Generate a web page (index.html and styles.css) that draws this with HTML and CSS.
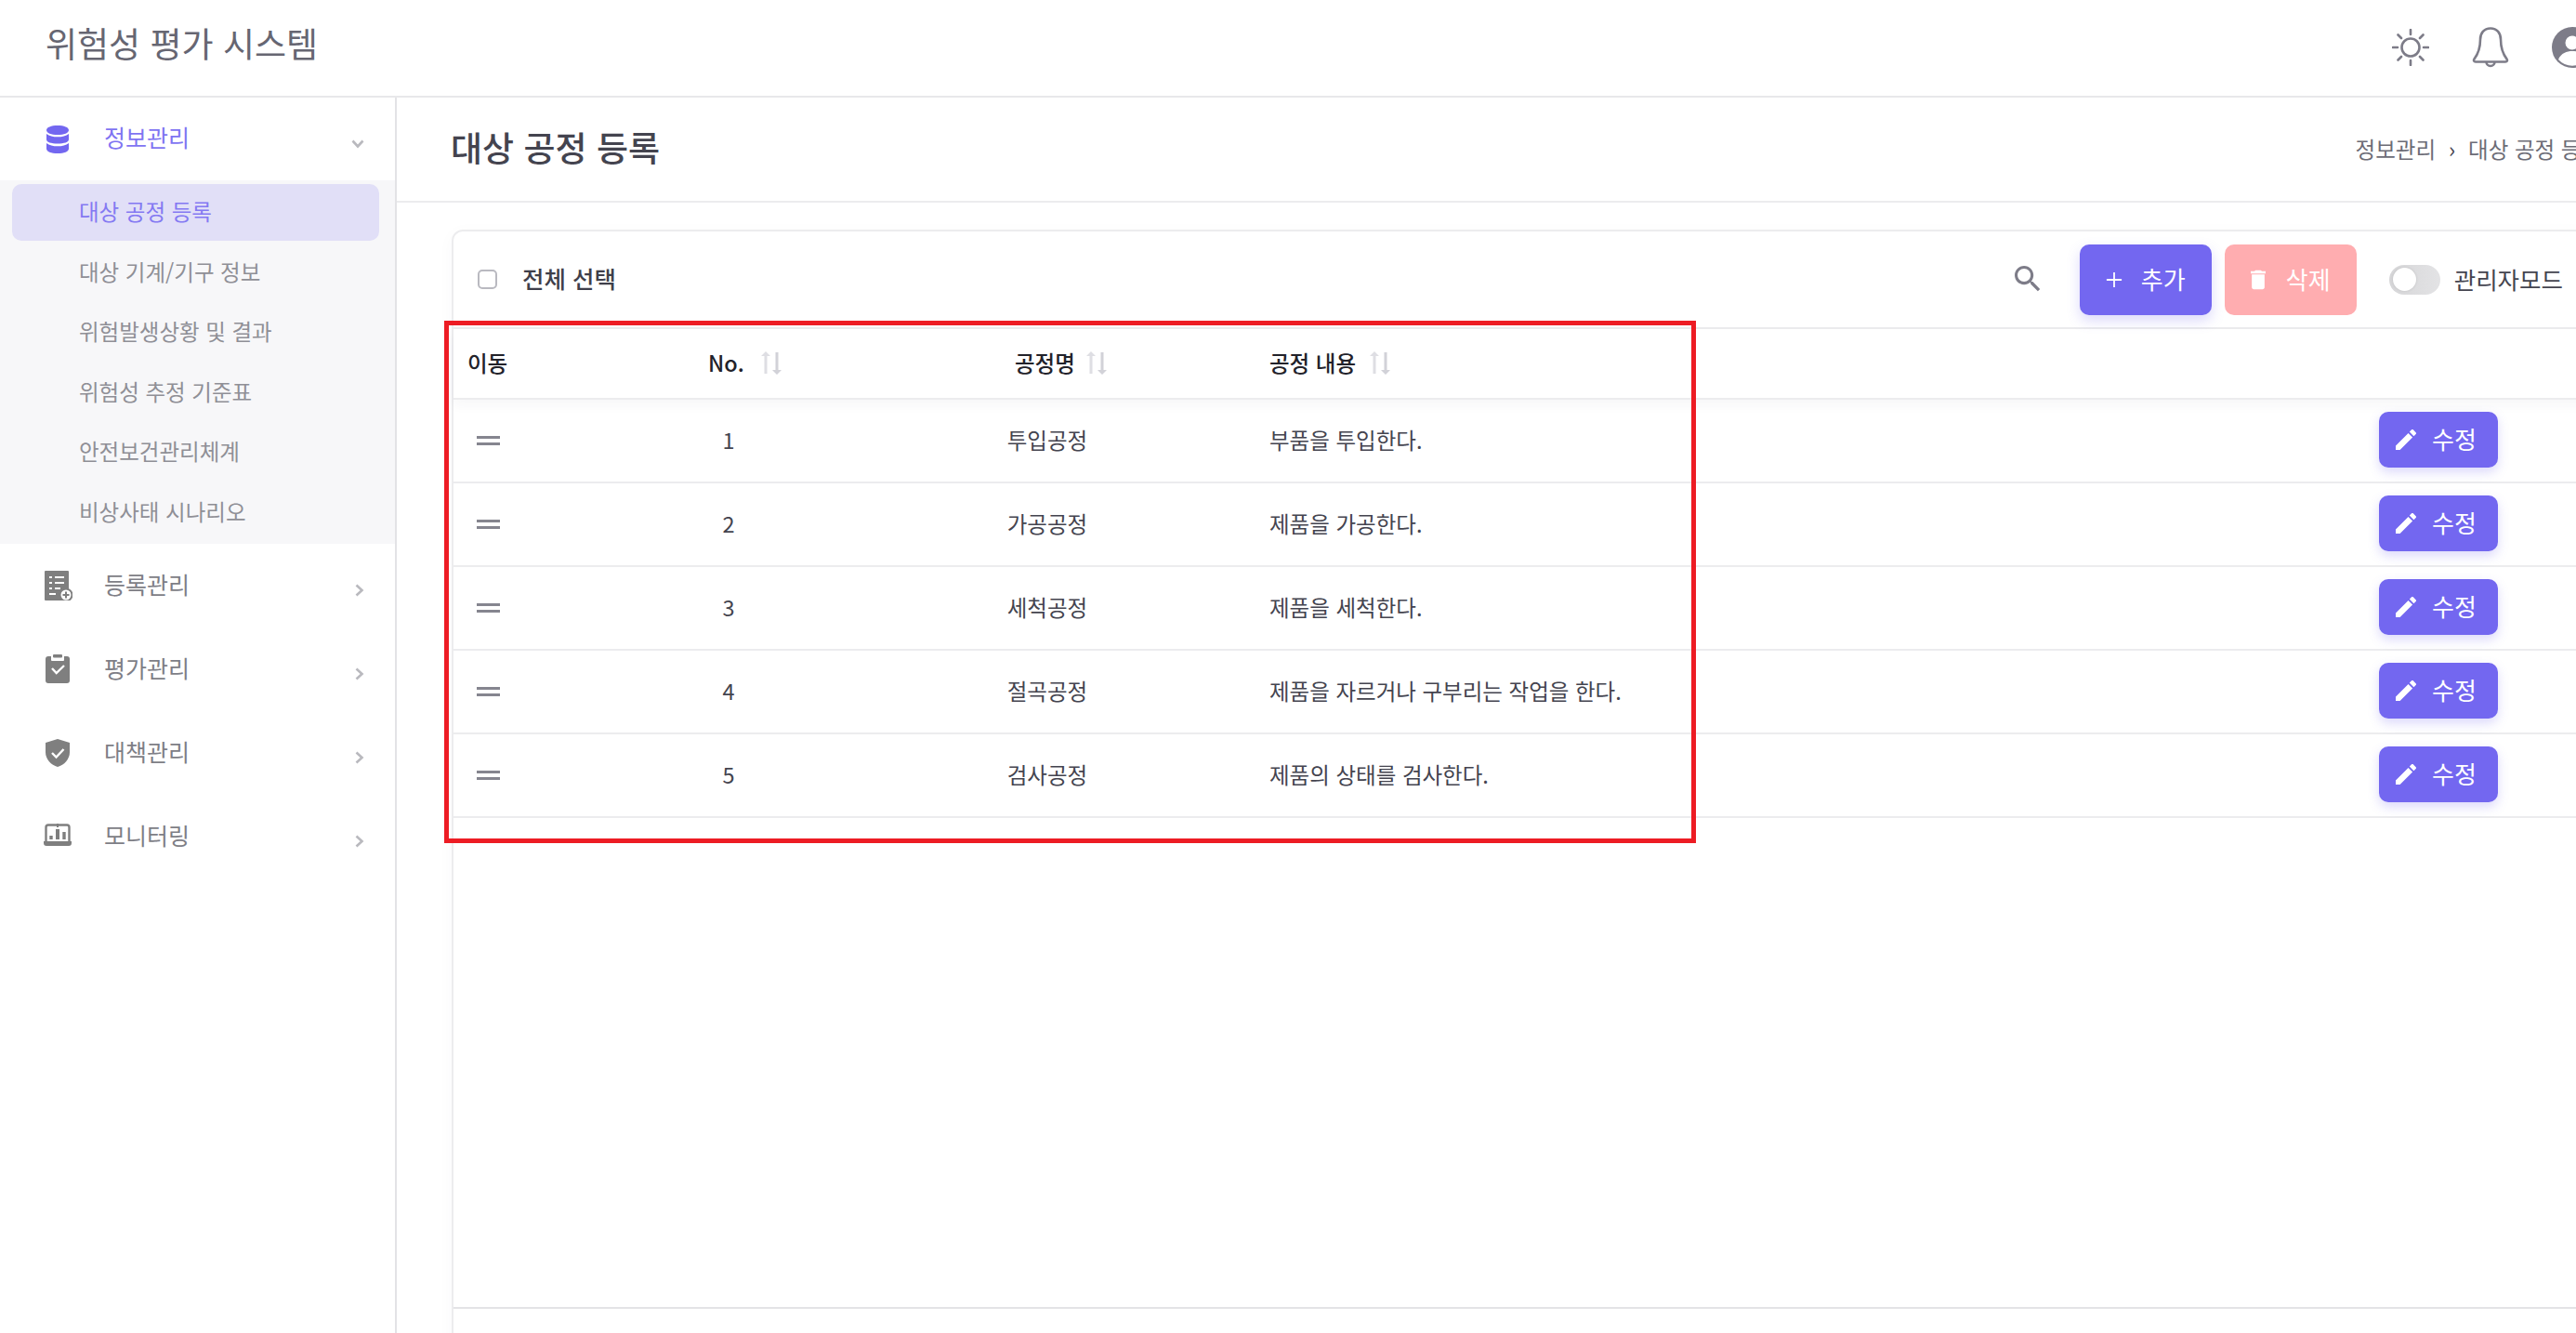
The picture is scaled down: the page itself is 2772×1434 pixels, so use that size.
FILE: index.html
```html
<!DOCTYPE html>
<html lang="ko">
<head>
  <meta charset="UTF-8" />
  <title>위험성 평가 시스템</title>
  <link rel="stylesheet" href="styles.css">
</head>
<body>
  <div class="app">
    <header class="topbar">
      <div class="brand">위험성 평가 시스템</div>
      <div class="top-icons">
        <svg class="ic-sun" viewBox="0 0 40 40" fill="none" stroke="#7d7c88" stroke-width="2.6" stroke-linecap="round"><circle cx="20" cy="20" r="9.5"/><path d="M20 1v5M20 34v5M1 20h5M34 20h5M6.500 6.500l3.500 3.500M30 30l3.500 3.500M6.500 33.500l3.500-3.500M30 10l3.500-3.500"/></svg>
        <svg class="ic-bell" viewBox="0 0 40 44" fill="none" stroke="#7d7c88" stroke-width="2.6" stroke-linejoin="round"><path d="M20 1.500c-7 0-11 5-11 12 0 9-2 15-6.500 21-1 1.500-.5 3 1.500 3h32c2 0 2.500-1.500 1.500-3-4.500-6-6.500-12-6.500-21 0-7-4-12-11-12z"/><path d="M15.500 37.500a4.500 4.500 0 0 0 9 0"/></svg>
        <svg class="ic-user" viewBox="0 0 44 44"><circle cx="22" cy="22" r="22" fill="#7d7c88"/><circle cx="22" cy="17" r="7.500" fill="#fff"/><path d="M7 35c3-7 9-9 15-9s12 2 15 9a20 20 0 0 1-30 0z" fill="#fff"/></svg>
      </div>
    </header>
    <div class="body-row">
      <aside class="sidebar">
        <div class="menu-item active first">
          <svg class="menu-icon" viewBox="0 0 32 32"><path fill="#7367f0" d="M4 6c0-3 5-5 12-5s12 2 12 5-5 5-12 5S4 9 4 6zM4 10c3 2.500 7 3.300 12 3.300S25 12.500 28 10v6c0 3-5 4.500-12 4.500S4 19 4 16zM4 20c3 2.500 7 3.300 12 3.300S25 22.500 28 20v6c0 3-5 5-12 5S4 29 4 26z"/></svg>
          <span class="menu-label">정보관리</span>
          <svg class="chev-down" viewBox="0 0 14 10" fill="none" stroke="#b9b9be" stroke-width="2.6"><path d="M1.500 1.500 7 7.500l5.500-6"/></svg>
        </div>
        <div class="submenu">
          <div class="sub-item current">대상 공정 등록</div>
          <div class="sub-item">대상 기계/기구 정보</div>
          <div class="sub-item">위험발생상황 및 결과</div>
          <div class="sub-item">위험성 추정 기준표</div>
          <div class="sub-item">안전보건관리체계</div>
          <div class="sub-item">비상사태 시나리오</div>
        </div>
        <div class="menu-item">
          <svg class="menu-icon" viewBox="0 0 32 32"><rect x="2" y="0" width="26" height="32" rx="1" fill="#7f7f7f"/><path stroke="#fff" stroke-width="2" d="M7 7h3M13 7h10M7 13h3M13 13h10M7 19h3M13 19h6M7 25h7"/><circle cx="25" cy="26" r="6.500" fill="#fff" stroke="#7f7f7f" stroke-width="2"/><path stroke="#7f7f7f" stroke-width="2" d="M21.500 26h7M25 22.500v7"/></svg>
          <span class="menu-label">등록관리</span>
          <svg class="chev-right" viewBox="0 0 10 14" fill="none" stroke="#b9b9be" stroke-width="2.6"><path d="M1.500 1.500 7.500 7l-6 5.500"/></svg>
        </div>
        <div class="menu-item">
          <svg class="menu-icon" viewBox="0 0 32 32"><path fill="#7f7f7f" d="M6 2h20c2 0 3 1 3 3v23c0 2-1 3-3 3H6c-2 0-3-1-3-3V5c0-2 1-3 3-3z"/><rect x="9" y="0" width="14" height="7" rx="1" fill="#fff"/><rect x="11" y="0" width="10" height="3.500" rx="1" fill="#7f7f7f"/><path fill="none" stroke="#fff" stroke-width="2.4" d="M10 15l4.700 5L23 12"/></svg>
          <span class="menu-label">평가관리</span>
          <svg class="chev-right" viewBox="0 0 10 14" fill="none" stroke="#b9b9be" stroke-width="2.6"><path d="M1.500 1.500 7.500 7l-6 5.500"/></svg>
        </div>
        <div class="menu-item">
          <svg class="menu-icon" viewBox="0 0 32 32"><path fill="#7f7f7f" d="M16 1 3 5v10c0 8 6 14 13 16 7-2 13-8 13-16V5z"/><path fill="none" stroke="#fff" stroke-width="2.4" d="M10 16l4.500 4.500L22.500 12"/></svg>
          <span class="menu-label">대책관리</span>
          <svg class="chev-right" viewBox="0 0 10 14" fill="none" stroke="#b9b9be" stroke-width="2.6"><path d="M1.500 1.500 7.500 7l-6 5.500"/></svg>
        </div>
        <div class="menu-item">
          <svg class="menu-icon" viewBox="0 0 32 32"><path fill="none" stroke="#7f7f7f" stroke-width="2.4" d="M3.500 21V6c0-1.500 1-2.500 2.500-2.500h20c1.500 0 2.500 1 2.500 2.500v15"/><path fill="#7f7f7f" d="M1 21h30v2c0 2-1 3-3 3H4c-2 0-3-1-3-3zM7.300 15h3.400v4H7.300zM14 8h4v11h-4zM21.300 11h3.400v8h-3.400zM15 2h2v4h-2z"/></svg>
          <span class="menu-label">모니터링</span>
          <svg class="chev-right" viewBox="0 0 10 14" fill="none" stroke="#b9b9be" stroke-width="2.6"><path d="M1.500 1.500 7.500 7l-6 5.500"/></svg>
        </div>
      </aside>
      <main class="main">
        <div class="page-head">
          <h1>대상 공정 등록</h1>
          <div class="crumbs"><span>정보관리</span><span class="crumb-sep">›</span><span>대상 공정 등록</span></div>
        </div>
        <div class="page-body">
          <section class="card">
            <div class="toolbar">
              <span class="checkbox"></span>
              <span class="select-all">전체 선택</span>
              <div class="toolbar-right">
                <svg class="ic-search" viewBox="3 3 18 18"><path fill="#7d7c88" d="M15.500 14h-.79l-.28-.27C15.410 12.590 16 11.110 16 9.500 16 5.910 13.090 3 9.500 3S3 5.910 3 9.500 5.910 16 9.500 16c1.610 0 3.090-.59 4.230-1.570l.27.28v.79l5 4.990L20.490 19l-4.990-5zm-6 0C7.010 14 5 11.990 5 9.500S7.010 5 9.500 5 14 7.010 14 9.500 11.990 14 9.500 14z"/></svg>
                <button class="btn btn-add"><svg class="btn-icon" viewBox="0 0 20 20" stroke="#fff" stroke-width="2"><path d="M10 1v18M1 10h18"/></svg>추가</button>
                <button class="btn btn-del"><svg class="btn-icon" viewBox="5 3 14 18"><path fill="#fff" d="M6 19c0 1.100.9 2 2 2h8c1.100 0 2-.9 2-2V7H6v12zM19 4h-3.500l-1-1h-5l-1 1H5v2h14V4z"/></svg>삭제</button>
                <span class="toggle"><span class="knob"></span></span>
                <span class="admin-label">관리자모드</span>
              </div>
            </div>
            <div class="row head-row">
              <div class="cell-move">이동</div>
              <div class="head-no">No.<svg class="sort" viewBox="0 0 22 26"><path fill="#dedee3" d="M3.500 5H0l5-5 5 5H6.500v19h-3z"/><path fill="#d2d2d8" d="M15.500 1h3v19H22l-5 5-5-5h3.500z"/></svg></div>
              <div class="head-name">공정명<svg class="sort" viewBox="0 0 22 26"><path fill="#dedee3" d="M3.500 5H0l5-5 5 5H6.500v19h-3z"/><path fill="#d2d2d8" d="M15.500 1h3v19H22l-5 5-5-5h3.500z"/></svg></div>
              <div class="head-desc">공정 내용<svg class="sort" viewBox="0 0 22 26"><path fill="#dedee3" d="M3.500 5H0l5-5 5 5H6.500v19h-3z"/><path fill="#d2d2d8" d="M15.500 1h3v19H22l-5 5-5-5h3.500z"/></svg></div>
            </div>
            <div class="row">
              <div class="cell-drag"><span class="drag"></span></div>
              <div class="cell-center">1</div>
              <div class="cell-center">투입공정</div>
              <div class="cell-desc">부품을 투입한다.</div>
              <button class="btn btn-edit"><svg class="btn-icon" viewBox="3 3 18 18"><path fill="#fff" d="M3 17.250V21h3.750L17.810 9.940l-3.750-3.750L3 17.250zM20.710 7.040c.39-.39.39-1.020 0-1.410l-2.340-2.340c-.39-.39-1.020-.39-1.410 0l-1.830 1.830 3.750 3.750 1.830-1.830z"/></svg>수정</button>
            </div>
            <div class="row">
              <div class="cell-drag"><span class="drag"></span></div>
              <div class="cell-center">2</div>
              <div class="cell-center">가공공정</div>
              <div class="cell-desc">제품을 가공한다.</div>
              <button class="btn btn-edit"><svg class="btn-icon" viewBox="3 3 18 18"><path fill="#fff" d="M3 17.250V21h3.750L17.810 9.940l-3.750-3.750L3 17.250zM20.710 7.040c.39-.39.39-1.020 0-1.410l-2.340-2.340c-.39-.39-1.020-.39-1.410 0l-1.830 1.830 3.750 3.750 1.830-1.830z"/></svg>수정</button>
            </div>
            <div class="row">
              <div class="cell-drag"><span class="drag"></span></div>
              <div class="cell-center">3</div>
              <div class="cell-center">세척공정</div>
              <div class="cell-desc">제품을 세척한다.</div>
              <button class="btn btn-edit"><svg class="btn-icon" viewBox="3 3 18 18"><path fill="#fff" d="M3 17.250V21h3.750L17.810 9.940l-3.750-3.750L3 17.250zM20.710 7.040c.39-.39.39-1.020 0-1.410l-2.340-2.340c-.39-.39-1.020-.39-1.410 0l-1.830 1.830 3.750 3.750 1.830-1.830z"/></svg>수정</button>
            </div>
            <div class="row">
              <div class="cell-drag"><span class="drag"></span></div>
              <div class="cell-center">4</div>
              <div class="cell-center">절곡공정</div>
              <div class="cell-desc">제품을 자르거나 구부리는 작업을 한다.</div>
              <button class="btn btn-edit"><svg class="btn-icon" viewBox="3 3 18 18"><path fill="#fff" d="M3 17.250V21h3.750L17.810 9.940l-3.750-3.750L3 17.250zM20.710 7.040c.39-.39.39-1.020 0-1.410l-2.340-2.340c-.39-.39-1.020-.39-1.410 0l-1.830 1.830 3.750 3.750 1.830-1.830z"/></svg>수정</button>
            </div>
            <div class="row">
              <div class="cell-drag"><span class="drag"></span></div>
              <div class="cell-center">5</div>
              <div class="cell-center">검사공정</div>
              <div class="cell-desc">제품의 상태를 검사한다.</div>
              <button class="btn btn-edit"><svg class="btn-icon" viewBox="3 3 18 18"><path fill="#fff" d="M3 17.250V21h3.750L17.810 9.940l-3.750-3.750L3 17.250zM20.710 7.040c.39-.39.39-1.020 0-1.410l-2.340-2.340c-.39-.39-1.020-.39-1.410 0l-1.830 1.830 3.750 3.750 1.830-1.830z"/></svg>수정</button>
            </div>
            <div class="table-space"></div>
            <div class="card-foot"></div>
          </section>
        </div>
      </main>
    </div>
    <div class="highlight"></div>
  </div>
</body>
</html>
```

FILE: styles.css
```css
html, body {
  margin: 0;
  padding: 0;
  height: 100%;
  overflow: hidden;
  background: #fff;
}
body {
  font-family: "Noto Sans CJK KR", "Inter", "Noto Sans", sans-serif;
  color: #4b4b57;
}
.app {
  position: relative;
  width: 2890px;
  height: 1434px;
  display: flex;
  flex-direction: column;
}
.topbar {
  height: 105px;
  flex: none;
  box-sizing: border-box;
  border-bottom: 2px solid #e8e8ea;
  display: flex;
  align-items: center;
  justify-content: space-between;
  padding: 0 100px 0 49px;
}
.brand {
  font-size: 37px;
  white-space: nowrap;
  padding-bottom: 12px;
  color: #666672;
}
.top-icons {
  display: flex;
  align-items: center;
  padding-bottom: 2px;
}
.ic-sun { width: 40px; height: 40px; }
.ic-bell { width: 40px; height: 44px; margin-left: 46px; }
.ic-user { width: 44px; height: 44px; margin-left: 46px; }

.body-row {
  flex: 1;
  display: flex;
  min-height: 0;
}
.sidebar {
  width: 427px;
  flex: none;
  box-sizing: border-box;
  border-right: 2px solid #e3e3e6;
}
.menu-item {
  height: 90px;
  display: flex;
  align-items: center;
  padding: 0 33px 0 46px;
  font-size: 25px;
  color: #7e7e86;
}
.menu-item.first { height: 89px; }
.menu-item.active { color: #7f74f2; }
.menu-icon { width: 32px; height: 32px; flex: none; }
.menu-label {
  margin-left: 34px;
  padding-bottom: 5px;
}
.chev-down { width: 14px; height: 10px; margin-left: auto; margin-top: 10px; }
.chev-right { width: 10px; height: 14px; margin-left: auto; margin-top: 10px; }
.submenu {
  height: 391px;
  box-sizing: border-box;
  padding-top: 4px;
  background: #f7f7f9;
}
.sub-item {
  height: 61px;
  box-sizing: border-box;
  margin: 0 17px 3.5px 13px;
  padding: 0 0 3px 72px;
  display: flex;
  align-items: center;
  font-size: 23.5px;
  color: #8f8f96;
  border-radius: 10px;
}
.sub-item.current {
  background: #e1dff7;
  color: #8479f2;
}

.main {
  flex: 1;
  min-width: 0;
}
.page-head {
  height: 113px;
  box-sizing: border-box;
  border-bottom: 2px solid #ececee;
  display: flex;
  align-items: center;
  justify-content: space-between;
  padding: 0 91px 0 58px;
}
.page-head h1 {
  margin: 0;
  padding-bottom: 6px;
  font-size: 37px;
  font-weight: 500;
  color: #44444f;
}
.crumbs {
  font-size: 23.5px;
  color: #6c6c76;
  display: flex;
  align-items: center;
  white-space: nowrap;
  padding-bottom: 2px;
}
.crumb-sep { margin: 0 14px; color: #44444f; }
.page-body {
  padding: 29px 60px 0 59px;
}
.card {
  border: 2px solid #ececee;
  border-bottom: none;
  border-radius: 12px 12px 0 0;
  height: 1200px;
  display: flex;
  flex-direction: column;
  box-shadow: 0 4px 18px rgba(60, 60, 80, .03);
}
.toolbar {
  height: 105px;
  flex: none;
  box-sizing: border-box;
  border-bottom: 2px solid #ececee;
  display: flex;
  align-items: center;
  padding-left: 26px;
}
.checkbox {
  width: 21px;
  height: 21px;
  box-sizing: border-box;
  border: 2px solid #b9b9c0;
  border-radius: 5px;
}
.select-all {
  margin-left: 27px;
  padding-bottom: 4px;
  font-size: 25.5px;
  font-weight: 500;
  color: #3f3f4a;
}
.toolbar-right {
  margin-left: auto;
  display: flex;
  align-items: center;
  padding-right: 70px;
}
.ic-search { width: 28px; height: 28px; margin-bottom: 2px; }
.btn {
  border: none;
  font-family: inherit;
  color: #fff;
  font-size: 26px;
  display: flex;
  align-items: center;
  justify-content: center;
  border-radius: 10px;
  padding: 0 0 3px;
}
.btn-icon { flex: none; }
.btn-add {
  width: 142px;
  height: 76px;
  margin-left: 42px;
  background: #7367f0;
  box-shadow: 0 6px 14px rgba(115, 103, 240, .25);
}
.btn-add .btn-icon { width: 18px; height: 18px; margin-right: 20px; margin-top: 3px; }
.btn-del {
  width: 142px;
  height: 76px;
  margin-left: 14px;
  background: #ffadb0;
}
.btn-del .btn-icon { width: 16px; height: 22px; margin-right: 22px; margin-top: 3px; }
.toggle {
  width: 55px;
  height: 32px;
  margin-left: 35px;
  box-sizing: border-box;
  border-radius: 16px;
  background: linear-gradient(90deg, #d6d6d8, #e3e3e5);
  display: flex;
  align-items: center;
  padding-left: 4px;
}
.knob {
  width: 25px;
  height: 25px;
  border-radius: 50%;
  background: #fff;
  box-shadow: 0 0 3px rgba(0, 0, 0, .12);
}
.admin-label {
  margin-left: 15px;
  padding-bottom: 3px;
  font-size: 25.5px;
  color: #44444f;
}

.row {
  height: 90px;
  flex: none;
  box-sizing: border-box;
  border-bottom: 2px solid #ececee;
  display: grid;
  grid-template-columns: 142px 308px 378px 1244px auto;
  align-items: center;
  font-size: 23.5px;
  color: #44444f;
}
.head-row {
  height: 76px;
  font-weight: 500;
  color: #22222a;
  box-shadow: 0 6px 12px rgba(60, 60, 80, .04);
}
.cell-move { padding: 0 0 3px 15px; }
.head-no, .head-name, .head-desc {
  display: flex;
  align-items: center;
  padding-bottom: 3px;
}
.head-no { padding-left: 132px; }
.head-name { padding-left: 154px; }
.head-desc { padding-left: 50px; }
.sort { width: 22px; height: 26px; margin-left: 15px; margin-top: 3px; }
.head-no .sort { margin-left: 18px; }
.head-name .sort { margin-left: 12px; }
.cell-drag { padding-left: 25px; }
.drag {
  display: block;
  width: 25px;
  height: 10px;
  box-sizing: border-box;
  border-top: 3px solid #85858f;
  border-bottom: 3px solid #85858f;
}
.cell-center { text-align: center; padding-bottom: 3px; }
.cell-desc { padding: 0 0 3px 50px; }
.btn-edit {
  width: 128px;
  height: 60px;
  margin-bottom: 2px;
  padding-left: 18px;
  justify-content: flex-start;
  background: #7367f0;
  box-shadow: 0 5px 12px rgba(115, 103, 240, .25);
}
.btn-edit .btn-icon { width: 22px; height: 22px; margin-right: 17px; margin-top: 3px; }
.table-space { flex: 1; }
.card-foot {
  height: 41px;
  flex: none;
  border-top: 2px solid #e3e3e6;
}
.highlight {
  position: absolute;
  left: 478px;
  top: 345px;
  width: 1347px;
  height: 562px;
  box-sizing: border-box;
  border: 5px solid #ed1c24;
  pointer-events: none;
}
```
